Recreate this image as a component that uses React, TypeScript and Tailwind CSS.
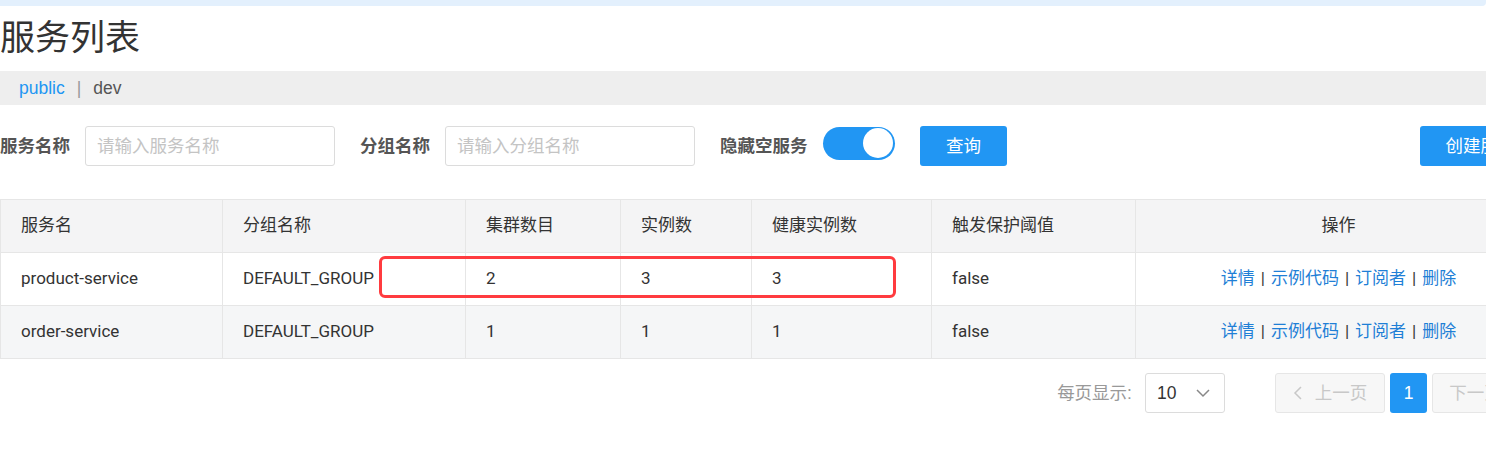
import React from "react";

const font = { fontFamily: '"Liberation Sans", Arial, "Noto Sans CJK SC", sans-serif' };
const tableFont = { fontFamily: 'Roboto, "Liberation Sans", Arial, "Noto Sans CJK SC", sans-serif' };

const rows = [
  { name: "product-service", group: "DEFAULT_GROUP", cluster: "2", inst: "3", healthy: "3", prot: "false" },
  { name: "order-service", group: "DEFAULT_GROUP", cluster: "1", inst: "1", healthy: "1", prot: "false" },
];

const cols = ["w-[222px]", "w-[243px]", "w-[155px]", "w-[131px]", "w-[180px]", "w-[204px]", "w-[406px]"];

function Actions() {
  return (
    <div className="flex items-center justify-center gap-[6px] text-[#1f7fd6]">
      <span>详情</span>
      <span className="text-[#333]">|</span>
      <span>示例代码</span>
      <span className="text-[#333]">|</span>
      <span>订阅者</span>
      <span className="text-[#333]">|</span>
      <span>删除</span>
    </div>
  );
}

export default function App() {
  return (
    <div className="w-[1486px] h-[450px] overflow-hidden bg-white text-[#333]" style={font}>
      <div className="w-[1560px]">
        <div className="h-[6px] w-[1486px] bg-[#e3f0fd] rounded-br-[4px]" />
        <div className="h-[65px] flex items-center text-[35px] leading-none text-[#333] pb-[2px]">服务列表</div>
        <div className="h-[34px] bg-[#eeeeee] flex items-center pl-[19px] text-[17.5px] w-[1486px]">
          <span className="text-[#2196f3]">public</span>
          <span className="mx-[12px] text-[#999]">|</span>
          <span className="text-[#555]">dev</span>
        </div>
        <div className="pt-[21px] pb-[33px] text-[17.5px]">
          <div className="flex items-center h-[40px] w-[1541px]">
            <span className="font-bold text-[#555] w-[85px]">服务名称</span>
            <div className="w-[250px] h-[40px] border border-[#dcdcdc] rounded-[3px] flex items-center pl-[11px] text-[#c4c4c4]">请输入服务名称</div>
            <span className="font-bold text-[#555] ml-[25px] w-[85px]">分组名称</span>
            <div className="w-[250px] h-[40px] border border-[#dcdcdc] rounded-[3px] flex items-center pl-[11px] text-[#c4c4c4]">请输入分组名称</div>
            <span className="font-bold text-[#555] ml-[25px] w-[103px]">隐藏空服务</span>
            <div className="w-[72px] h-[33px] rounded-full bg-[#2196f3] flex items-center justify-end p-[2px] -mt-[6px]">
              <div className="w-[30px] h-[30px] rounded-full bg-white" />
            </div>
            <button className="ml-[25px] w-[87px] h-[40px] rounded-[3px] bg-[#2196f3] text-white">查询</button>
            <div className="flex-1" />
            <button className="w-[121px] h-[40px] rounded-[3px] bg-[#2196f3] text-white whitespace-nowrap">创建服务</button>
          </div>
        </div>
        <div className="relative w-[1541px]" style={tableFont}>
          <table className="border-collapse text-[17px] table-fixed w-[1541px]">
            <thead>
              <tr className="h-[53px] bg-[#f4f4f5]">
                {["服务名", "分组名称", "集群数目", "实例数", "健康实例数", "触发保护阈值", "操作"].map((h, i) => (
                  <th key={h} className={`${cols[i]} border border-[#e6e6e6] font-normal px-[20px] ${i === 6 ? "text-center" : "text-left"}`}>{h}</th>
                ))}
              </tr>
            </thead>
            <tbody>
              {rows.map((r, idx) => (
                <tr key={r.name} className={`h-[53px] ${idx === 1 ? "bg-[#f5f6f7]" : "bg-white"}`}>
                  <td className="border border-[#e6e6e6] px-[20px]">{r.name}</td>
                  <td className="border border-[#e6e6e6] px-[20px]">{r.group}</td>
                  <td className="border border-[#e6e6e6] px-[20px]">{r.cluster}</td>
                  <td className="border border-[#e6e6e6] px-[20px]">{r.inst}</td>
                  <td className="border border-[#e6e6e6] px-[20px]">{r.healthy}</td>
                  <td className="border border-[#e6e6e6] px-[20px]">{r.prot}</td>
                  <td className="border border-[#e6e6e6] px-[20px]"><Actions /></td>
                </tr>
              ))}
            </tbody>
          </table>
          <div className="absolute left-[379px] top-[57px] w-[517px] h-[42px] border-[3px] border-[#ff3b3f] rounded-[6px] pointer-events-none" />
        </div>
        <div className="w-[1541px] flex items-center justify-end mt-[14px] h-[40px] text-[17.5px]">
          <span className="text-[#999] mr-[13px]">每页显示:</span>
          <div className="w-[80px] h-[40px] border border-[#dcdcdc] rounded-[3px] flex items-center justify-between pl-[11px] pr-[13px]">
            <span className="text-[#333]">10</span>
            <svg width="16" height="10" viewBox="0 0 16 10" fill="none" stroke="#888" strokeWidth="1.5"><path d="M2 2l6 6 6-6" /></svg>
          </div>
          <div className="ml-[50px] w-[110px] h-[40px] border border-[#e6e6e6] bg-[#f7f7f7] rounded-[3px] flex items-center justify-center gap-[12px] text-[#c8c8c8]">
            <svg width="10" height="16" viewBox="0 0 10 16" fill="none" stroke="#c8c8c8" strokeWidth="1.5"><path d="M8 2L2 8l6 6" /></svg>
            <span>上一页</span>
          </div>
          <div className="ml-[5px] w-[37px] h-[40px] bg-[#2196f3] rounded-[3px] flex items-center justify-center text-white">1</div>
          <div className="ml-[5px] w-[109px] h-[40px] border border-[#e6e6e6] bg-[#f7f7f7] rounded-[3px] flex items-center justify-center gap-[12px] text-[#c8c8c8] whitespace-nowrap">
            <span>下一页</span>
            <svg width="10" height="16" viewBox="0 0 10 16" fill="none" stroke="#c8c8c8" strokeWidth="1.5"><path d="M2 2l6 6-6 6" /></svg>
          </div>
        </div>
      </div>
    </div>
  );
}
